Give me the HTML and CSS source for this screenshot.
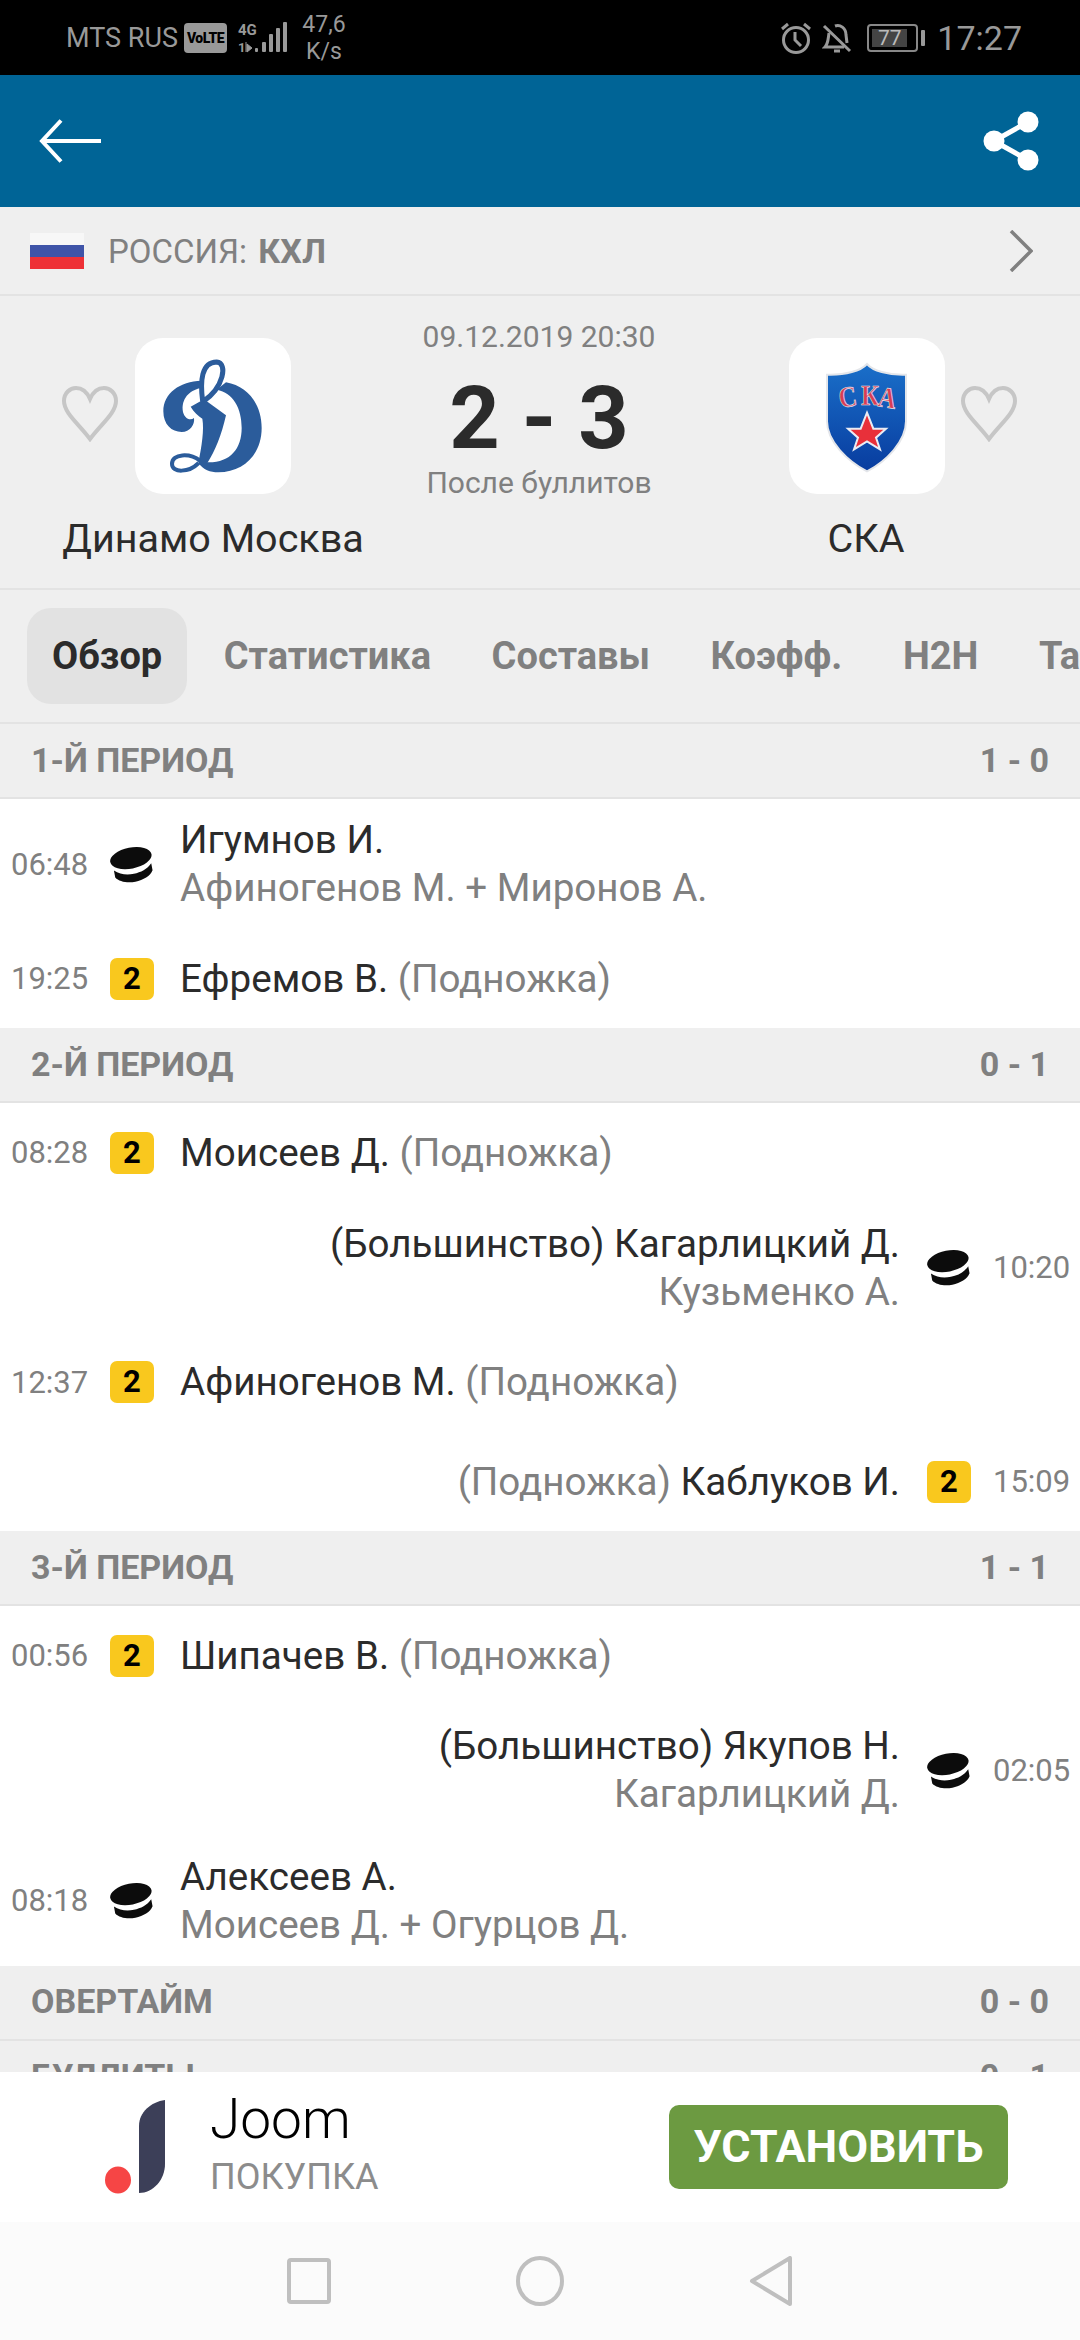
FILE: index.html
```html
<!DOCTYPE html>
<html lang="ru">
<head>
  <meta charset="UTF-8">
  <meta name="viewport" content="width=device-width, initial-scale=1.0">
  <title>Динамо Москва - СКА</title>
  <link rel="stylesheet" href="styles.css">
</head>
<body>
  <svg class="defs" width="0" height="0">
    <symbol id="puck" viewBox="0 0 44 37">
      <g transform="rotate(-11 22 18)">
        <ellipse cx="22" cy="12" rx="21" ry="10.5" fill="#0c0c0c"/>
        <path d="M3 21c5 5 12 7 19 7s14-2 19-7v7c-3 5-11 8-19 8S6 33 3 28z" fill="#0c0c0c"/>
      </g>
    </symbol>
    <symbol id="heart" viewBox="0 0 58 56">
      <path d="M29 53C18 38 3 27 3 15 3 7 9 2 15 2c6 0 11 4 14 11C32 6 37 2 43 2c6 0 12 5 12 13 0 12-15 23-26 38z" fill="none" stroke="#c6c6c6" stroke-width="4"/>
    </symbol>
  </svg>

  <div class="screen">
    <!-- статус бар -->
    <div class="status">
      <div class="status-left">
        <span class="carrier">MTS RUS</span>
        <span class="volte">VoLTE</span>
        <svg class="signal" width="52" height="32" viewBox="0 0 52 32">
          <text x="1" y="13" class="net">4G</text>
          <text x="1" y="30" class="net-small">1</text>
          <path d="M9 20v10M10 22l5 4-5 4z" fill="#999" stroke="#999"/>
          <rect x="18" y="26" width="3" height="4" rx="1" fill="#999"/>
          <rect x="25" y="20" width="4" height="10" rx="1" fill="#999"/>
          <rect x="32" y="12" width="4" height="18" rx="1" fill="#999"/>
          <rect x="39" y="6" width="4" height="24" rx="1" fill="#999"/>
          <rect x="46" y="0" width="4" height="30" rx="1" fill="#999"/>
        </svg>
        <span class="speed">47,6<br>K/s</span>
      </div>
      <div class="status-right">
        <svg width="32" height="32" viewBox="0 0 32 32" fill="none" stroke="#999" stroke-width="3">
          <circle cx="16" cy="18" r="12.5"/>
          <path d="M15 10v8l6 6M2 7l6-5M30 7l-6-5"/>
        </svg>
        <svg class="bell" width="30" height="32" viewBox="0 0 30 32" fill="none" stroke="#999" stroke-width="3">
          <path d="M7 11c-1 7-1 11-4 14h19M13 4c5-2 11 2 11 9l1 8"/>
          <path d="M2 4l26 25M12 29h6"/>
        </svg>
        <div class="battery"><span class="battery-level">77</span></div>
        <span class="battery-tip"></span>
        <span class="clock">17:27</span>
      </div>
    </div>

    <div class="toolbar">
      <svg width="64" height="44" viewBox="0 0 64 44" fill="none" stroke="#fff" stroke-width="4">
        <path d="M22 1.5L3 22l19 20.5M3 22h59"/>
      </svg>
      <svg width="56" height="60" viewBox="0 0 56 60" fill="#fff">
        <circle cx="45" cy="11" r="10.5"/>
        <circle cx="45" cy="49" r="10.5"/>
        <circle cx="11" cy="30" r="10.5"/>
        <path d="M11 30L45 11M11 30l34 19" stroke="#fff" stroke-width="5"/>
      </svg>
    </div>

    <div class="league">
      <div class="flag"><i class="white"></i><i class="blue"></i><i class="red"></i></div>
      <span class="league-name">РОССИЯ: <b>КХЛ</b></span>
      <svg class="chevron" width="24" height="42" viewBox="0 0 24 42" fill="none" stroke="#808080" stroke-width="3.5">
        <path d="M2 1l20 20L2 41"/>
      </svg>
    </div>

    <div class="match">
      <div class="team team-home">
        <div class="team-top">
          <svg class="heart"><use href="#heart"/></svg>
          <div class="logo">
            <svg width="156" height="156" viewBox="45 50 468 468">
              <g fill="#2b5c9b">
                <path d="M318 183c67 12 107 67 107 137 0 80-55 133-130 133-25 0-45-8-60-28l27-2c68 2 103-40 103-103 0-60-25-105-75-115z"/>
                <path d="M212 256l40-22 66 48c-13 58-33 108-56 143h-27c10-50 18-100 12-133-12-8-26-20-35-36z"/>
                <path d="M244 178c-64 2-114 37-114 92 0 40 25 62 55 62 25 0 40-22 37-42-12 10-32 0-34-25-2-40 27-60 56-65z"/>
              </g>
              <g fill="none" stroke="#2b5c9b">
                <path d="M248 240c-8-60-4-118 42-118 35 3 20 78-40 118" stroke-width="15"/>
                <path d="M240 418c-30-23-84-22-84 10 0 27 50 27 80-3" stroke-width="12"/>
              </g>
            </svg>
          </div>
        </div>
        <div class="team-name">Динамо Москва</div>
      </div>

      <div class="score-box">
        <div class="match-date">09.12.2019 20:30</div>
        <div class="score">2 - 3</div>
        <div class="match-note">После буллитов</div>
      </div>

      <div class="team team-away">
        <div class="team-top">
          <div class="logo">
            <svg width="156" height="156" viewBox="54 50 468 468">
              <defs>
                <linearGradient id="shield" x1="0" y1="0" x2="0" y2="1">
                  <stop offset="0" stop-color="#1a6fc9"/>
                  <stop offset="1" stop-color="#083c9f"/>
                </linearGradient>
              </defs>
              <path d="M288 128c-18 20-63 34-120 32v140c0 60 62 120 120 150 58-30 117-90 117-150V160c-55 2-100-12-117-32z" fill="url(#shield)" stroke="#e4e6ea" stroke-width="6"/>
              <text class="ska" transform="translate(208 260) rotate(-9) scale(.85 1)">С</text>
              <text class="ska" transform="translate(270 250) scale(.85 1)">К</text>
              <text class="ska" transform="translate(318 254) rotate(9) scale(.85 1)">А</text>
              <path d="M288 274l19 48h38l-30 27 12 35-39-24-39 24 12-35-30-27h38z" fill="#e8303a" stroke="#e9ecf4" stroke-width="6"/>
            </svg>
          </div>
          <svg class="heart"><use href="#heart"/></svg>
        </div>
        <div class="team-name">СКА</div>
      </div>
    </div>

    <div class="tabs">
      <span class="tab active">Обзор</span>
      <span class="tab">Статистика</span>
      <span class="tab">Составы</span>
      <span class="tab">Коэфф.</span>
      <span class="tab">H2H</span>
      <span class="tab">Таблица</span>
    </div>

    <div class="feed">
      <div class="period"><span>1-Й ПЕРИОД</span><span>1 - 0</span></div>
      <div class="row double">
        <span class="time">06:48</span>
        <svg class="puck"><use href="#puck"/></svg>
        <div class="text">Игумнов И.<br><span class="muted">Афиногенов М. + Миронов А.</span></div>
      </div>
      <div class="row">
        <span class="time">19:25</span>
        <span class="penalty">2</span>
        <div class="text">Ефремов В. <span class="muted">(Подножка)</span></div>
      </div>

      <div class="period"><span>2-Й ПЕРИОД</span><span>0 - 1</span></div>
      <div class="row">
        <span class="time">08:28</span>
        <span class="penalty">2</span>
        <div class="text">Моисеев Д. <span class="muted">(Подножка)</span></div>
      </div>
      <div class="row double away">
        <span class="time">10:20</span>
        <svg class="puck"><use href="#puck"/></svg>
        <div class="text">(Большинство) Кагарлицкий Д.<br><span class="muted">Кузьменко А.</span></div>
      </div>
      <div class="row">
        <span class="time">12:37</span>
        <span class="penalty">2</span>
        <div class="text">Афиногенов М. <span class="muted">(Подножка)</span></div>
      </div>
      <div class="row away">
        <span class="time">15:09</span>
        <span class="penalty">2</span>
        <div class="text"><span class="muted">(Подножка)</span> Каблуков И.</div>
      </div>

      <div class="period"><span>3-Й ПЕРИОД</span><span>1 - 1</span></div>
      <div class="row">
        <span class="time">00:56</span>
        <span class="penalty">2</span>
        <div class="text">Шипачев В. <span class="muted">(Подножка)</span></div>
      </div>
      <div class="row double away">
        <span class="time">02:05</span>
        <svg class="puck"><use href="#puck"/></svg>
        <div class="text">(Большинство) Якупов Н.<br><span class="muted">Кагарлицкий Д.</span></div>
      </div>
      <div class="row double">
        <span class="time">08:18</span>
        <svg class="puck"><use href="#puck"/></svg>
        <div class="text">Алексеев А.<br><span class="muted">Моисеев Д. + Огурцов Д.</span></div>
      </div>

      <div class="period"><span>ОВЕРТАЙМ</span><span>0 - 0</span></div>
      <div class="period"><span>БУЛЛИТЫ</span><span>0 - 1</span></div>
    </div>

    <div class="ad">
      <svg class="ad-logo" width="60" height="94" viewBox="0 0 60 94">
        <ellipse cx="13" cy="80" rx="13" ry="13.5" fill="#f64545"/>
        <path d="M60 0v64c0 16-12 29-26 29V26C34 12 46 2 60 0z" fill="#3c3f58"/>
      </svg>
      <div class="ad-info">
        <div class="ad-title">Joom</div>
        <div class="ad-sub">ПОКУПКА</div>
      </div>
      <div class="ad-btn">УСТАНОВИТЬ</div>
    </div>

    <div class="navbar">
      <svg width="44" height="46" viewBox="0 0 44 46" fill="none" stroke="#bfbfbf" stroke-width="4"><rect x="2" y="2" width="40" height="42" rx="2"/></svg>
      <svg width="48" height="50" viewBox="0 0 48 50" fill="none" stroke="#bfbfbf" stroke-width="4"><ellipse cx="24" cy="25" rx="22" ry="23"/></svg>
      <svg width="44" height="50" viewBox="0 0 44 50" fill="none" stroke="#bfbfbf" stroke-width="4" stroke-linejoin="round"><path d="M41 2v46L3 25z"/></svg>
    </div>
  </div>
</body>
</html>
```

FILE: styles.css
```css
* {
  box-sizing: border-box;
}
html,
body {
  margin: 0;
  width: 1080px;
  height: 2340px;
}
body {
  font-family: Roboto, "Noto Sans", sans-serif;
  color: #2b2b2b;
}
.defs {
  display: block;
  height: 0;
}
.screen {
  width: 1080px;
  height: 2340px;
  display: flex;
  flex-direction: column;
  overflow: hidden;
  background: #fff;
}

/* status bar */
.status {
  height: 75px;
  background: #000;
  color: #999;
  display: flex;
  justify-content: space-between;
  align-items: center;
  padding: 0 58px 0 66px;
  flex: none;
}
.status-left,
.status-right {
  display: flex;
  align-items: center;
}
.carrier {
  font-size: 27px;
}
.volte {
  width: 43px;
  height: 30px;
  margin-left: 6px;
  background: #999;
  color: #000;
  border-radius: 4px;
  font-size: 14px;
  font-weight: 900;
  line-height: 30px;
  text-align: center;
  letter-spacing: -0.5px;
}
.signal {
  margin-left: 10px;
}
.net {
  font-size: 15px;
  font-weight: 700;
  fill: #999;
}
.net-small {
  font-size: 13px;
  font-weight: 700;
  fill: #999;
}
.speed {
  margin-left: 12px;
  width: 46px;
  font-size: 23px;
  line-height: 27px;
  text-align: center;
}
.bell {
  margin-left: 10px;
}
.battery {
  width: 51px;
  height: 28px;
  margin-left: 15px;
  padding: 3px;
  border: 2px solid #888;
  border-radius: 4px;
}
.battery-level {
  display: block;
  width: 35px;
  height: 18px;
  background: #444;
  color: #bbb;
  font-size: 21px;
  line-height: 18px;
  text-align: center;
}
.battery-tip {
  width: 4px;
  height: 16px;
  margin-left: 3px;
  background: #999;
  border-radius: 1px;
}
.clock {
  margin-left: 12px;
  font-size: 34px;
}

/* toolbar */
.toolbar {
  height: 132px;
  flex: none;
  background: #006496;
  display: flex;
  justify-content: space-between;
  align-items: center;
  padding: 0 41px 0 39px;
}

.league {
  height: 89px;
  flex: none;
  background: #efefef;
  border-bottom: 2px solid #e3e3e3;
  display: flex;
  align-items: center;
  padding: 0 47px 0 30px;
}
.flag {
  width: 54px;
  height: 36px;
  display: flex;
  flex-direction: column;
}
.flag i {
  flex: 1;
}
.flag .white { background: #f7f7f7; }
.flag .blue { background: #3f54a8; }
.flag .red { background: #ee3136; }
.league-name {
  margin-left: 24px;
  flex: 1;
  font-size: 33px;
  color: #808080;
  word-spacing: 3px;
}
.league-name b {
  font-size: 34px;
}

/* match header */
.match {
  height: 294px;
  flex: none;
  background: #efefef;
  border-bottom: 2px solid #e3e3e3;
  display: flex;
}
.team {
  display: flex;
  flex-direction: column;
  padding-top: 42px;
}
.team-home {
  width: 426px;
}
.team-away {
  width: 428px;
}
.team-top {
  display: flex;
  align-items: center;
  height: 156px;
}
.team-home .team-top {
  padding-left: 61px;
  gap: 16px;
}
.team-away .team-top {
  justify-content: flex-end;
  padding-right: 62px;
  gap: 15px;
}
.heart {
  width: 58px;
  height: 56px;
  margin-top: -5px;
  flex: none;
}
.logo {
  width: 156px;
  height: 156px;
  background: #fff;
  border-radius: 28px;
  flex: none;
  overflow: hidden;
}
.logo svg {
  display: block;
}
.ska {
  font-family: "Liberation Serif", serif;
  font-size: 88px;
  font-weight: 700;
  fill: #d83c55;
  stroke: #e8e8ee;
  stroke-width: 2px;
}
.team-name {
  margin-top: 21px;
  font-size: 39.5px;
  line-height: 48px;
  text-align: center;
}
.score-box {
  width: 226px;
  display: flex;
  flex-direction: column;
  align-items: center;
  padding-top: 20px;
}
.match-date,
.match-note {
  font-size: 30px;
  line-height: 42px;
  color: #808080;
  white-space: nowrap;
}
.score {
  margin-top: 14px;
  font-size: 88px;
  font-weight: 700;
  line-height: 92px;
  white-space: nowrap;
}
.match-note {
  margin-top: -2px;
}

/* tabs */
.tabs {
  height: 134px;
  flex: none;
  background: #efefef;
  border-bottom: 2px solid #e3e3e3;
  display: flex;
  align-items: center;
  padding: 0 0 0 27px;
  gap: 10.5px;
  overflow: hidden;
}
.tab {
  height: 96px;
  padding: 0 25px;
  border-radius: 24px;
  flex: none;
  font-size: 38px;
  font-weight: 700;
  line-height: 96px;
  color: #808080;
}
.tab.active {
  background: #e2e2e2;
  color: #2b2b2b;
  margin-right: 1px;
}

/* incidents */
.feed {
  flex: 1;
  min-height: 0;
  overflow: hidden;
}
.period {
  height: 75px;
  background: #efefef;
  border-bottom: 2px solid #e3e3e3;
  display: flex;
  justify-content: space-between;
  align-items: center;
  padding: 0 31px 2px;
  font-size: 34px;
  font-weight: 700;
  color: #808080;
}
.row {
  height: 99.2px;
  display: flex;
  align-items: center;
  padding: 0 11px;
}
.row.double {
  height: 130.2px;
}
.row.away {
  flex-direction: row-reverse;
  text-align: right;
}
.time {
  width: 76px;
  flex: none;
  font-size: 31px;
  color: #808080;
  text-align: right;
}
.away .time {
  text-align: left;
}
.puck,
.penalty {
  width: 44px;
  height: 42px;
  margin: 0 26px 0 23px;
  flex: none;
}
.away .puck,
.away .penalty {
  margin: 0 22px 0 27px;
}
.puck {
  height: 37px;
}
.penalty {
  background: #f9c81e;
  border-radius: 7px;
  color: #000;
  font-size: 31px;
  font-weight: 700;
  line-height: 42px;
  text-align: center;
}
.text {
  flex: 1;
  font-size: 38.6px;
  line-height: 48px;
  white-space: nowrap;
}
.muted {
  color: #808080;
}

/* ad */
.ad {
  height: 150px;
  flex: none;
  background: #fff;
  display: flex;
  align-items: center;
  padding: 0 72px 0 105px;
}
.ad-logo {
  flex: none;
}
.ad-info {
  margin-left: 45px;
  flex: 1;
}
.ad-title {
  font-size: 55px;
  font-weight: 300;
  line-height: 60px;
  color: #000;
  margin-top: -6px;
}
.ad-sub {
  margin-top: 6px;
  font-size: 36px;
  line-height: 44px;
  color: #8c8c8c;
}
.ad-btn {
  width: 339px;
  height: 84px;
  background: #6c9a41;
  border-radius: 10px;
  color: #fff;
  font-size: 44.8px;
  font-weight: 700;
  line-height: 84px;
  text-align: center;
}

.navbar {
  height: 118px;
  flex: none;
  background: #fbfbfb;
  display: flex;
  align-items: center;
  justify-content: center;
  gap: 185px;
  padding-bottom: 1px;
}
```
